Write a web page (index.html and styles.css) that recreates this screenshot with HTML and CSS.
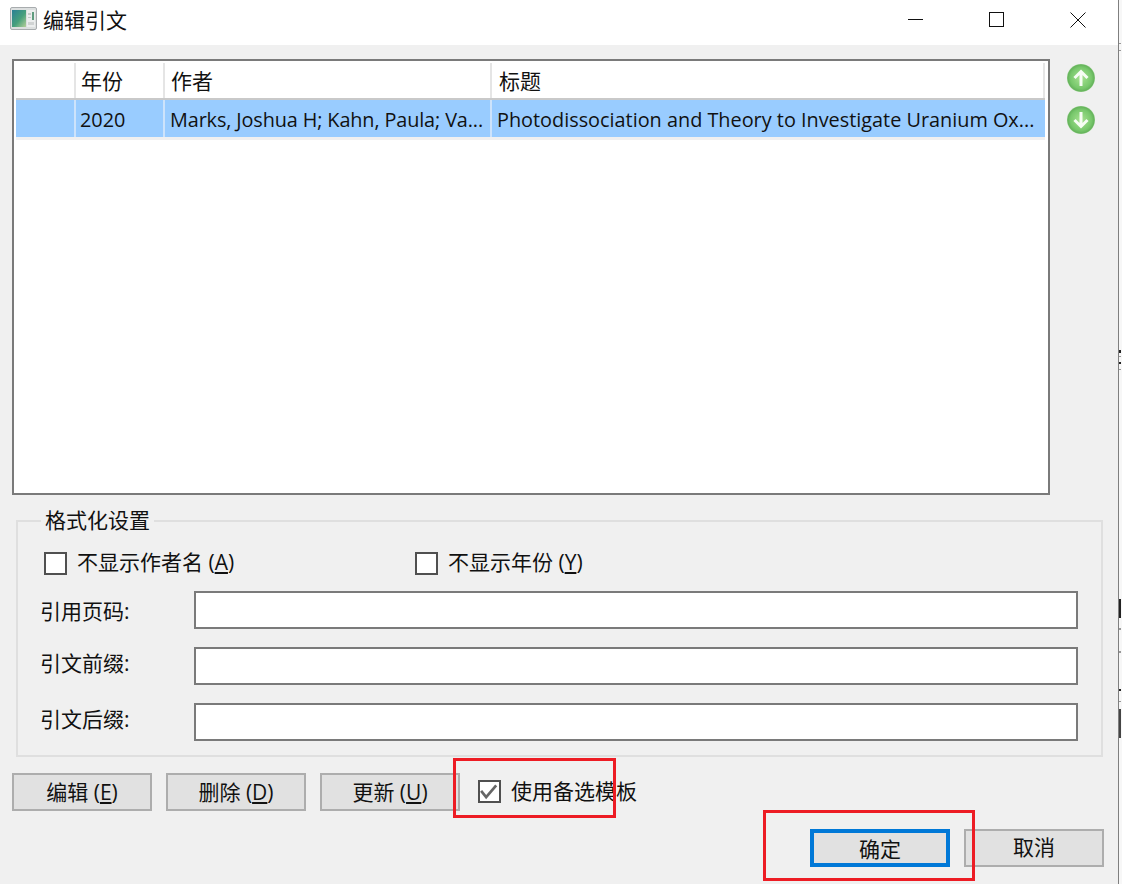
FILE: index.html
```html
<!DOCTYPE html>
<html lang="zh-CN">
<head>
<meta charset="utf-8">
<title>编辑引文</title>
<link rel="stylesheet" href="styles.css">
</head>
<body>
<div class="app">
  <div class="window">
    <header class="titlebar">
      <svg class="app-icon" viewBox="0 0 27 23" width="27" height="23">
        <defs>
          <linearGradient id="pic" x1="0" y1="0" x2="1" y2="1">
            <stop offset="0" stop-color="#2a7f95"/>
            <stop offset="0.55" stop-color="#46a07c"/>
            <stop offset="1" stop-color="#b4cf98"/>
          </linearGradient>
        </defs>
        <rect x="0.5" y="0.5" width="26" height="22" rx="1.5" fill="#dcdfdf" stroke="#a8acae"/>
        <rect x="2" y="3" width="14" height="17" fill="url(#pic)"/>
        <rect x="17" y="3" width="8" height="17" fill="#eceeee"/>
        <rect x="18" y="6" width="3" height="2" fill="#c4c8c8"/>
        <rect x="22" y="5" width="2" height="8" fill="#5f9c7f"/>
        <rect x="18" y="10" width="3" height="1" fill="#c4c8c8"/>
        <rect x="18" y="15" width="6" height="3" fill="#d0d3d3"/>
      </svg>
      <span class="title-text">编辑引文</span>
      <div class="window-controls">
        <svg class="ctl ctl-min" viewBox="0 0 16 16" width="16" height="16"><path d="M0 7.500H15" stroke="#111" fill="none"/></svg>
        <svg class="ctl ctl-max" viewBox="0 0 16 16" width="16" height="16"><rect x="0.5" y="0.5" width="14" height="14" stroke="#111" fill="none"/></svg>
        <svg class="ctl ctl-close" viewBox="0 0 16 16" width="16" height="16"><path d="M0.5 0.5L15.5 15.5M15.5 0.5L0.5 15.5" stroke="#111" fill="none"/></svg>
      </div>
    </header>

    <main class="content">
      <div class="list-row">
        <div class="list">
          <div class="list-head">
            <div class="col col-0"></div>
            <div class="col col-1">年份</div>
            <div class="col col-2">作者</div>
            <div class="col col-3">标题</div>
          </div>
          <div class="list-item">
            <div class="cell col-0"></div>
            <div class="cell col-1">2020</div>
            <div class="cell col-2">Marks, Joshua H; Kahn, Paula; Va...</div>
            <div class="cell col-3">Photodissociation and Theory to Investigate Uranium Ox...</div>
          </div>
          <div class="list-gap"></div>
        </div>
        <div class="move">
          <svg class="orb" viewBox="0 0 30 30" width="30" height="30">
            <defs>
              <radialGradient id="green" cx="50%" cy="50%" r="52%">
                <stop offset="0" stop-color="#a8e292"/>
                <stop offset="0.72" stop-color="#78c86c"/>
                <stop offset="0.9" stop-color="#66b45c"/>
                <stop offset="1" stop-color="#a9d9a0"/>
              </radialGradient>
              <filter id="soft" x="-20%" y="-20%" width="140%" height="140%"><feGaussianBlur stdDeviation="0.45"/></filter>
            </defs>
            <circle cx="15" cy="15" r="14" fill="url(#green)"/>
            <path d="M15 23V9M8.500 15L15 8.500L21.500 15" stroke="#f6fdf3" stroke-width="3" fill="none" filter="url(#soft)"/>
          </svg>
          <svg class="orb" viewBox="0 0 30 30" width="30" height="30">
            <circle cx="15" cy="15" r="14" fill="url(#green)"/>
            <path d="M15 7V21M8.500 15L15 21.500L21.500 15" stroke="#f6fdf3" stroke-width="3" fill="none" filter="url(#soft)"/>
          </svg>
        </div>
      </div>

      <fieldset class="group">
        <legend class="group-title">格式化设置</legend>
        <div class="check-line">
          <label class="check check-a"><span class="box"></span><span>不显示作者名 (<u>A</u>)</span></label>
          <label class="check"><span class="box"></span><span>不显示年份 (<u>Y</u>)</span></label>
        </div>
        <div class="field"><span class="field-label">引用页码:</span><span class="input"></span></div>
        <div class="field"><span class="field-label field-label-up">引文前缀:</span><span class="input"></span></div>
        <div class="field"><span class="field-label field-label-up">引文后缀:</span><span class="input"></span></div>
      </fieldset>

      <div class="actions">
        <button class="btn">编辑 (<u>E</u>)</button>
        <button class="btn">删除 (<u>D</u>)</button>
        <button class="btn">更新 (<u>U</u>)</button>
        <label class="check check-alt">
          <span class="box">
            <svg viewBox="0 0 17 17" width="19" height="19"><path d="M1 8L5.500 13.500L14.500 3" stroke="#666" stroke-width="2.400" fill="none"/></svg>
          </span>
          <span>使用备选模板</span>
        </label>
      </div>

      <div class="confirm">
        <button class="btn btn-primary">确定</button>
        <button class="btn">取消</button>
      </div>
    </main>
  </div>
  <div class="edge">
    <i class="tick tick-a"></i><i class="tick tick-b"></i>
    <i class="tick tick-c"></i><i class="tick tick-d"></i>
    <i class="tick tick-e"></i><i class="tick tick-f"></i>
    <i class="tick tick-g"></i><i class="tick tick-h"></i>
    <i class="tick tick-i"></i><i class="tick tick-j"></i>
    <i class="tick tick-k"></i><i class="tick tick-l"></i>
  </div>
  <div class="mark mark-alt"></div>
  <div class="mark mark-ok"></div>
</div>
</body>
</html>
```

FILE: styles.css
```css
* { box-sizing: border-box; }
html, body { margin: 0; padding: 0; height: 100%; overflow: hidden; background: #f0f0f0; }
body {
  font-family: "Open Sans", "Noto Sans CJK SC", sans-serif;
  font-size: 21px;
  color: #111;
}
.app { position: relative; display: flex; width: 1122px; height: 884px; }
.window { width: 1118px; display: flex; flex-direction: column; }

.edge { width: 4px; background: #f7f7f7; border-left: 1px solid #7f7f7f; overflow: hidden; display: flex; flex-direction: column; }
.tick { display: block; width: 2px; height: 1px; background: #999; flex: none; }
.tick-a { margin-top: 43px; }
.tick-b { margin-top: 6px; }
.tick-c { margin-top: 299px; height: 3px; background: #222; }
.tick-d { margin-top: 3px; }
.tick-e { margin-top: 5px; height: 2px; background: #222; }
.tick-f { margin-top: 5px; }
.tick-g { margin-top: 229px; height: 19px; background: #222; }
.tick-h { margin-top: 10px; height: 2px; }
.tick-i { margin-top: 21px; height: 2px; }
.tick-j { margin-top: 36px; height: 2px; background: #222; }
.tick-k { margin-top: 10px; }
.tick-l { margin-top: 7px; height: 29px; background: #444; }

.titlebar { height: 45px; background: #fff; display: flex; align-items: center; padding: 0 0 8px 10px; flex: none; }
.app-icon { margin-right: 6px; }
.title-text { font-family: "Noto Sans CJK SC", sans-serif; }
.window-controls { margin-left: auto; align-self: stretch; display: flex; align-items: flex-start; padding: 12px 32px 0 0; gap: 65px; }
.ctl { display: block; }

.content { flex: 1; padding: 14px 0 0 12px; }
.list-row { display: flex; }
.list { width: 1038px; height: 436px; border: 2px solid #7a7a7a; background: #fff; padding: 2px 2px 0 2px; }
.list-head { display: flex; height: 35px; margin-right: 1px; align-items: center; font-family: "Noto Sans CJK SC", sans-serif; }
.list-head .col { height: 100%; border-right: 2px solid #e5e5e5; line-height: 35px; }
.list-head .col-1 { padding-left: 5px; }
.list-head .col-2 { padding-left: 6px; }
.list-head .col-3 { padding-left: 7px; }
.list-item { display: flex; height: 39px; margin-right: 1px; background: #99ccff; border-top: 2px solid #c9c9c9; }
.cell { border-right: 2px solid #cde3fb; line-height: 40px; font-size: 19.850px; white-space: nowrap; overflow: hidden; }
.list-item .col-1 { padding-left: 4px; }
.list-item .col-2 { padding-left: 5px; letter-spacing: -0.12px; }
.list-item .col-3 { padding-left: 5px; border-right: 0; }
.col-0 { width: 60px; }
.col-1 { width: 89px; }
.col-2 { width: 327px; }
.col-3 { flex: 1; }
.list-gap { height: 3px; background: #f0f0f0; margin-right: 1px; }

.move { display: flex; flex-direction: column; gap: 12px; margin: 4px 0 0 16px; }
.orb { display: block; }

.group { margin: 11px 0 0 4px; padding: 0 0 0 26px; width: 1087px; height: 251px; border: 2px solid #dfdfdf; min-inline-size: 0; }
.group-title { font-family: "Noto Sans CJK SC", sans-serif; line-height: 26px; padding: 0 4px 4px; margin-left: -3px; }

.check-line { display: flex; margin-top: 10px; height: 34px; align-items: center; }
.check { display: flex; align-items: center; gap: 10px; line-height: 32px; }
.check-a { width: 371px; }
.box { width: 23px; height: 23px; border: 2px solid #505050; background: #fff; display: flex; align-items: center; justify-content: center; flex: none; }
.check-line .check > span:last-child { position: relative; top: -1px; }

.field { display: flex; align-items: center; height: 38px; margin-top: 18px; margin-left: -4px; }
.check-line + .field { margin-top: 11px; }
.field-label { width: 154px; }
.field-label-up { padding-bottom: 8px; }
.input { width: 884px; height: 38px; border: 2px solid #7a7a7a; background: #fff; }

.actions { display: flex; align-items: center; margin-top: 16px; gap: 14px; }
.btn { width: 140px; height: 38px; background: #e1e1e1; border: 2px solid #adadad; padding: 0 0 2px; font: inherit; color: #111; }
.check-alt { margin-left: 4px; padding-bottom: 2px; }
.confirm { display: flex; justify-content: flex-end; gap: 14px; margin-top: 18px; padding-right: 14px; }
.confirm .btn { padding-bottom: 4px; }
.btn-primary { border: 4px solid #0078d7; }

.mark { position: absolute; border: 3px solid #ed1c24; pointer-events: none; }
.mark-alt { left: 453px; top: 758px; width: 163px; height: 60px; }
.mark-ok { left: 763px; top: 810px; width: 212px; height: 71px; }
```
